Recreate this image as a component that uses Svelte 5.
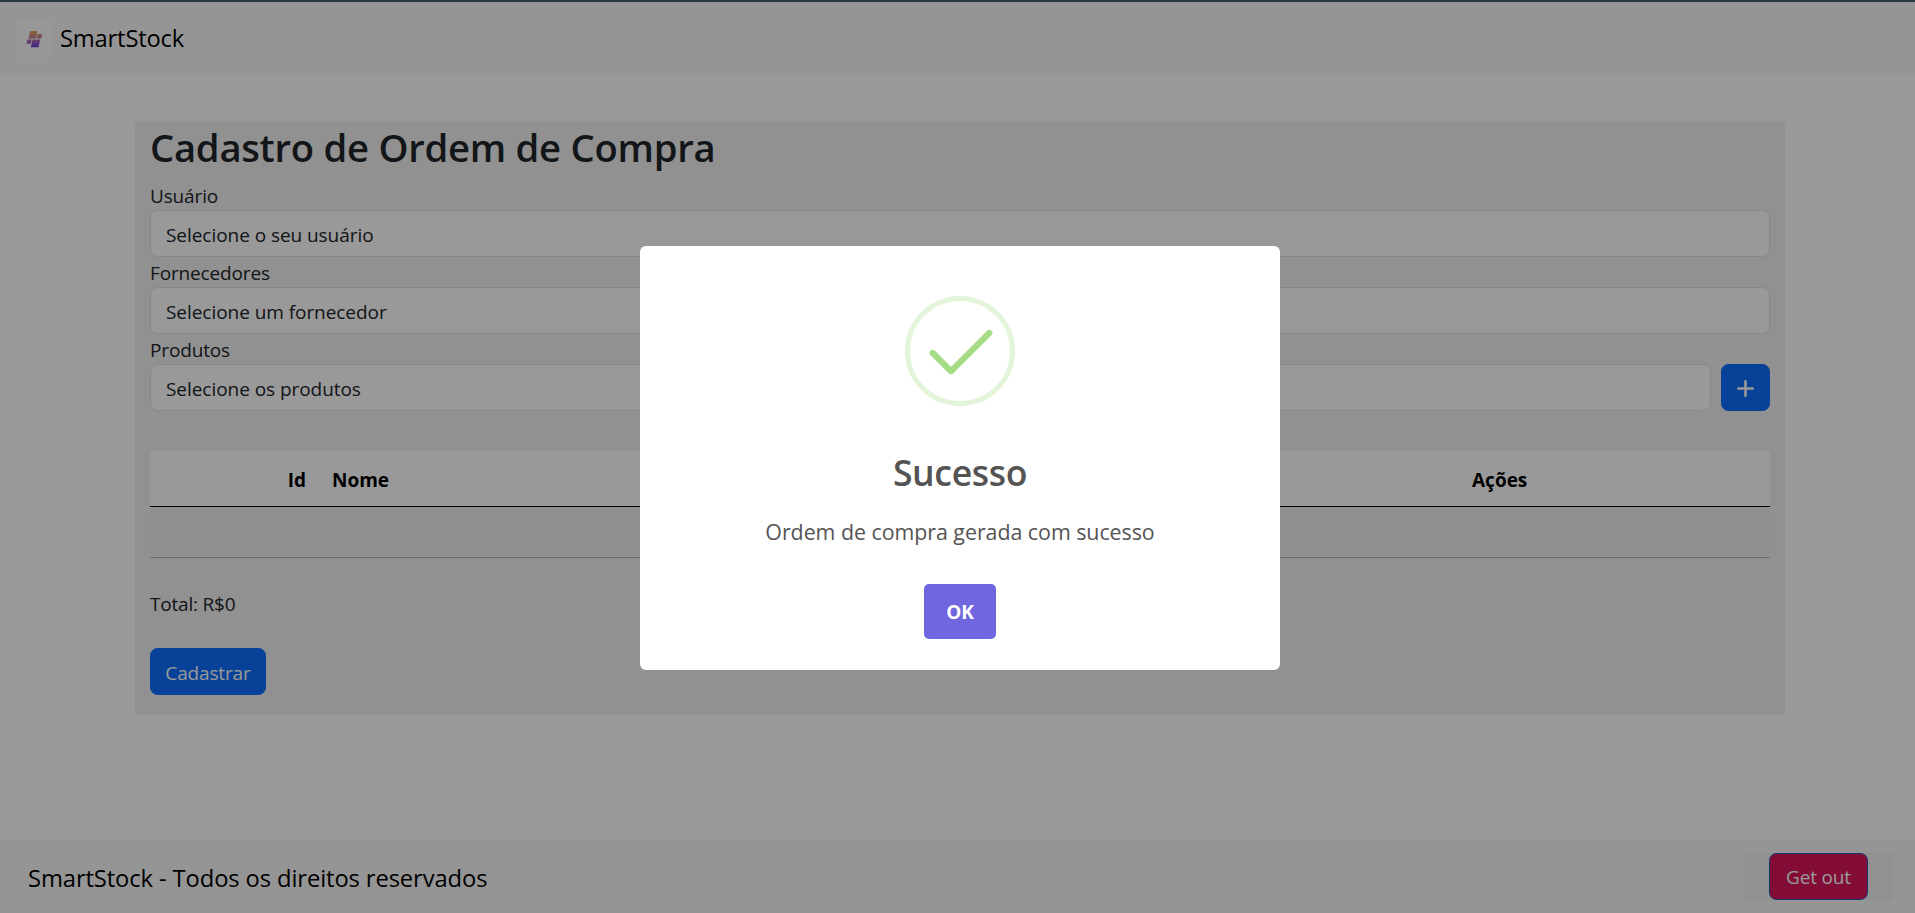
<script>
  const fields = [
    { label: 'Usuário', placeholder: 'Selecione o seu usuário' },
    { label: 'Fornecedores', placeholder: 'Selecione um fornecedor' },
    { label: 'Produtos', placeholder: 'Selecione os produtos', add: true }
  ];
</script>

<div class="page">
  <header class="navbar">
    <svg class="logo" width="38" height="38" viewBox="0 0 38 38">
      <defs>
        <linearGradient id="brand" x1="0" y1="11" x2="0" y2="27" gradientUnits="userSpaceOnUse">
          <stop offset="0" stop-color="#eda557" />
          <stop offset="0.5" stop-color="#b87aa4" />
          <stop offset="1" stop-color="#6a3de0" />
        </linearGradient>
      </defs>
      <rect width="38" height="38" fill="#fcfcfc" />
      <g fill="url(#brand)">
        <path d="M15.2 11H22.4L20.9 18.4H13.4Z" />
        <path d="M22.7 14H27.2L26.2 18.4H21.7Z" />
        <path d="M12.4 19.4H16.8L15.8 23.8H11.4Z" />
        <path d="M17.6 19.4H25.3L23.5 27.2H15.8Z" />
      </g>
    </svg>
    <span class="brand">SmartStock</span>
  </header>

  <main class="card">
    <h2>Cadastro de Ordem de Compra</h2>
    {#each fields as field}
      <span class="label">{field.label}</span>
      <div class="row">
        <div class="select">{field.placeholder}</div>
        {#if field.add}
          <button class="btn add" aria-label="Adicionar">
            <svg width="17" height="17" viewBox="0 0 17 17" fill="none" stroke="#fff" stroke-width="2.6" stroke-linecap="round">
              <path d="M8.5 1.3V15.7M1.3 8.5H15.7" />
            </svg>
          </button>
        {/if}
      </div>
    {/each}

    <div class="table">
      <div class="thead">
        <span class="id">Id</span>
        <span class="name">Nome</span>
        <span class="actions">Ações</span>
      </div>
      <div class="tbody"></div>
    </div>

    <p class="total">Total: R$0</p>
    <button class="btn submit">Cadastrar</button>
  </main>

  <footer class="footer">
    <span class="rights">SmartStock - Todos os direitos reservados</span>
    <div class="exit"><button class="btn out">Get out</button></div>
  </footer>
</div>

<div class="backdrop">
  <div class="modal" role="dialog">
    <svg class="check" width="110" height="110" viewBox="0 0 110 110" fill="none">
      <circle cx="55" cy="55" r="52.5" stroke="#a5dc86" stroke-opacity="0.3" stroke-width="5" />
      <path d="M27.7 57L46 75.3L84.3 37" stroke="#a5dc86" stroke-width="6.2" stroke-linecap="round" stroke-linejoin="round" />
    </svg>
    <h3>Sucesso</h3>
    <p class="message">Ordem de compra gerada com sucesso</p>
    <button class="ok">OK</button>
  </div>
</div>

<style>
  :global(body) {
    margin: 0;
    overflow: hidden;
  }
  .page,
  .backdrop {
    box-sizing: border-box;
    height: 913px;
    font-family: 'Open Sans', 'Noto Sans', sans-serif;
    font-size: 19px;
    line-height: 30px;
    color: #212529;
  }
  .page {
    display: flex;
    flex-direction: column;
    background: #fff;
    border-top: 2px solid #406068;
  }
  .navbar {
    box-sizing: border-box;
    height: 72px;
    flex: none;
    display: flex;
    align-items: center;
    padding: 2px 15px 0;
    gap: 7px;
    background: #f8f8f8;
  }
  .brand,
  .rights {
    font-size: 23.75px;
    letter-spacing: -0.11px;
    color: #000;
  }
  .brand {
    padding-bottom: 3px;
    letter-spacing: -0.2px;
  }
  .card {
    box-sizing: border-box;
    width: 1650px;
    height: 593px;
    flex: none;
    margin: 48px 0 0 135px;
    padding: 0 15px;
    background: #f2f2f2;
  }
  h2 {
    margin: 0 0 9px;
    padding-top: 1px;
    font-size: 38.2px;
    line-height: 48px;
    font-weight: 600;
    letter-spacing: -0.25px;
  }
  .label {
    display: block;
    box-sizing: border-box;
    height: 30px;
    padding-top: 1px;
    line-height: 30px;
    letter-spacing: -0.15px;
  }
  .row {
    display: flex;
    gap: 10px;
  }
  .select {
    box-sizing: border-box;
    flex: 1;
    height: 47px;
    padding: 1px 15px 0;
    border: 1px solid #dee2e6;
    border-radius: 7.5px;
    background: #fff;
    line-height: 46px;
    letter-spacing: -0.05px;
  }
  .btn {
    box-sizing: border-box;
    height: 47px;
    display: flex;
    align-items: center;
    justify-content: center;
    padding: 2px 0 0;
    border: 1px solid #0d6efd;
    border-radius: 7.5px;
    background: #0d6efd;
    color: #fff;
    font: inherit;
    letter-spacing: -0.15px;
  }
  .add {
    width: 49px;
  }
  .table {
    margin-top: 40px;
  }
  .thead {
    display: flex;
    box-sizing: border-box;
    height: 56px;
    background: #fff;
    border-bottom: 1px solid #000;
    color: #000;
    font-weight: 700;
    line-height: 58px;
  }
  .id {
    width: 156px;
    text-align: right;
  }
  .name {
    width: 1140px;
    padding-left: 26px;
  }
  .tbody {
    box-sizing: border-box;
    height: 51px;
    background: #f0f0f0;
    border-bottom: 1px solid #b3b3b3;
  }
  .total {
    margin: 31px 0 29px;
    letter-spacing: -0.2px;
  }
  .submit {
    width: 116px;
  }
  .footer {
    box-sizing: border-box;
    height: 74px;
    margin-top: auto;
    display: flex;
    align-items: center;
    justify-content: space-between;
    padding: 0 22px 0 27px;
    background: #f8f8f8;
  }
  .rights {
    padding: 3px 0 0 1px;
  }
  .exit {
    padding: 0 25px;
    background: #f2f2f2;
  }
  .out {
    width: 99px;
    border-color: #2162b8;
    background: #d9145a;
  }
  .backdrop {
    position: fixed;
    inset: 0;
    display: flex;
    align-items: center;
    justify-content: center;
    padding: 3px 0 0 5px;
    background: rgba(0, 0, 0, 0.4);
  }
  .modal {
    box-sizing: border-box;
    width: 640px;
    height: 424px;
    padding-top: 50px;
    display: flex;
    flex-direction: column;
    align-items: center;
    border-radius: 6px;
    background: #fff;
    color: #545454;
  }
  h3 {
    margin: 40px 0 0;
    font-size: 35.6px;
    line-height: 52px;
    font-weight: 600;
    letter-spacing: -0.35px;
  }
  .message {
    margin: 19px 0 0;
    font-size: 21.4px;
    line-height: 30px;
    letter-spacing: -0.04px;
  }
  .ok {
    box-sizing: border-box;
    width: 72px;
    height: 55px;
    margin-top: 37px;
    padding: 0;
    border: 0;
    border-radius: 5px;
    background: #7066e0;
    color: #fff;
    font: 700 19px 'Open Sans', 'Noto Sans', sans-serif;
  }
</style>
